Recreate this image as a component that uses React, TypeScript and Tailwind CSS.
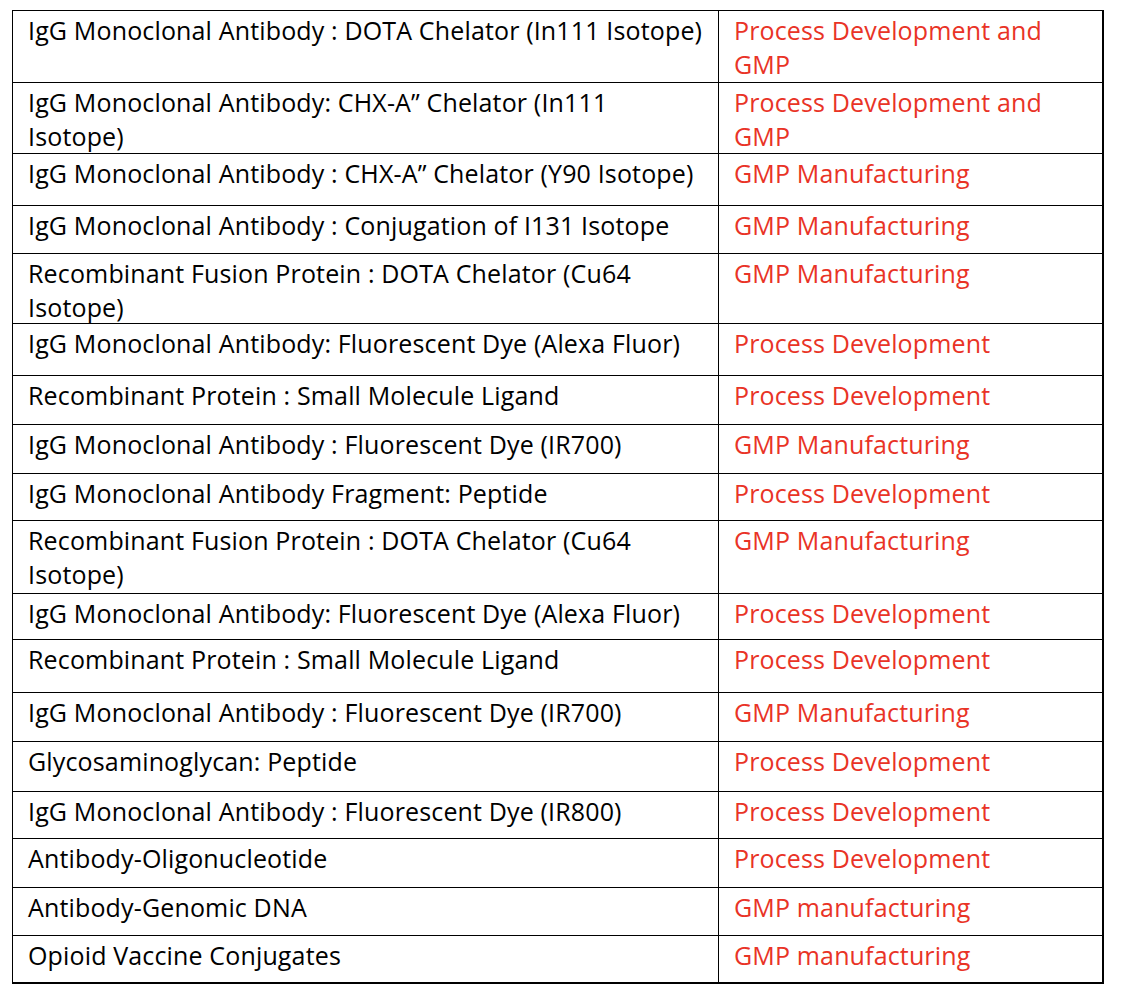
const rows: { h: string; left: string[]; right: string[] }[] = [
  { h: "h-[72px]", left: ["IgG Monoclonal Antibody : DOTA Chelator (In111 Isotope)"], right: ["Process Development and", "GMP"] },
  { h: "h-[71px]", left: ["IgG Monoclonal Antibody: CHX-A” Chelator (In111", "Isotope)"], right: ["Process Development and", "GMP"] },
  { h: "h-[52px]", left: ["IgG Monoclonal Antibody : CHX-A” Chelator (Y90 Isotope)"], right: ["GMP Manufacturing"] },
  { h: "h-[48px]", left: ["IgG Monoclonal Antibody : Conjugation of I131 Isotope"], right: ["GMP Manufacturing"] },
  { h: "h-[70px]", left: ["Recombinant Fusion Protein : DOTA Chelator (Cu64", "Isotope)"], right: ["GMP Manufacturing"] },
  { h: "h-[52px]", left: ["IgG Monoclonal Antibody: Fluorescent Dye (Alexa Fluor)"], right: ["Process Development"] },
  { h: "h-[49px]", left: ["Recombinant Protein : Small Molecule Ligand"], right: ["Process Development"] },
  { h: "h-[49px]", left: ["IgG Monoclonal Antibody : Fluorescent Dye (IR700)"], right: ["GMP Manufacturing"] },
  { h: "h-[47px]", left: ["IgG Monoclonal Antibody Fragment: Peptide"], right: ["Process Development"] },
  { h: "h-[73px]", left: ["Recombinant Fusion Protein : DOTA Chelator (Cu64", "Isotope)"], right: ["GMP Manufacturing"] },
  { h: "h-[46px]", left: ["IgG Monoclonal Antibody: Fluorescent Dye (Alexa Fluor)"], right: ["Process Development"] },
  { h: "h-[53px]", left: ["Recombinant Protein : Small Molecule Ligand"], right: ["Process Development"] },
  { h: "h-[49px]", left: ["IgG Monoclonal Antibody : Fluorescent Dye (IR700)"], right: ["GMP Manufacturing"] },
  { h: "h-[50px]", left: ["Glycosaminoglycan: Peptide"], right: ["Process Development"] },
  { h: "h-[47px]", left: ["IgG Monoclonal Antibody : Fluorescent Dye (IR800)"], right: ["Process Development"] },
  { h: "h-[49px]", left: ["Antibody-Oligonucleotide"], right: ["Process Development"] },
  { h: "h-[48px]", left: ["Antibody-Genomic DNA"], right: ["GMP manufacturing"] },
  { h: "h-[48px]", left: ["Opioid Vaccine Conjugates"], right: ["GMP manufacturing"] },
]

export default function App() {
  return (
    <div className="min-h-[994px] w-[1128px] bg-white pl-[12px] pt-[10px] font-['Open_Sans',sans-serif] text-[25px] leading-[34px] tracking-[0.15px]">
      <div className="w-[1092px] border-l border-t border-r-2 border-black">
        {rows.map((row, i) => (
          <div
            key={i}
            className={`${row.h} grid grid-cols-[706px_1fr] border-black ${i === rows.length - 1 ? "border-b-2" : "border-b"}`}
          >
            <div className="border-r border-black pl-[15px] pt-[2px] text-black whitespace-nowrap">
              {row.left.map((line, j) => (
                <div key={j}>{line}</div>
              ))}
            </div>
            <div className="pl-[15px] pt-[2px] text-[#e93326] whitespace-nowrap">
              {row.right.map((line, j) => (
                <div key={j}>{line}</div>
              ))}
            </div>
          </div>
        ))}
      </div>
    </div>
  )
}
